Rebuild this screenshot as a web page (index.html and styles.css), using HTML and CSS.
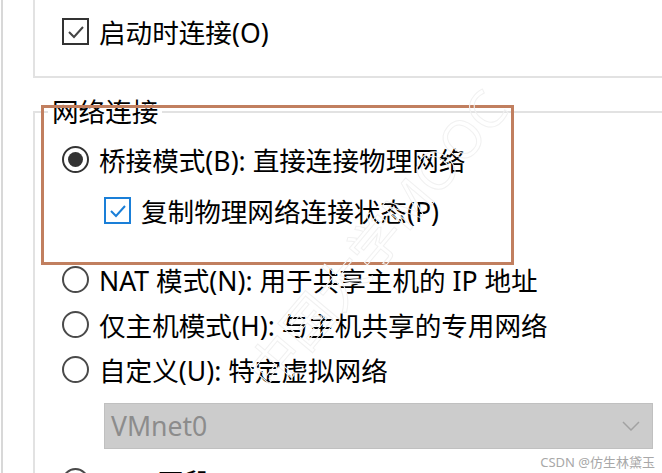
FILE: index.html
```html
<!DOCTYPE html>
<html lang="zh-CN">
<head>
  <meta charset="UTF-8">
  <meta name="viewport" content="width=device-width, initial-scale=1.0">
  <title>网络连接</title>
  <link rel="stylesheet" href="styles.css">
</head>
<body>
  <div class="frame">
    <!-- Device status group (top part cut off) -->
    <div class="group-top">
      <label class="opt">
        <span class="box"><svg viewBox="0 0 22 22" width="22" height="22"><polyline points="4,11 9,16 18,6" /></svg></span>
        启动时连接(O)
      </label>
    </div>

    <!-- Network connection group -->
    <fieldset class="net">
      <legend>网络连接</legend>
      <div class="net-body">
        <label class="opt"><span class="radio on"></span>桥接模式(B): 直接连接物理网络</label>
        <label class="opt sub">
          <span class="box blue"><svg viewBox="0 0 22 22" width="22" height="22"><polyline points="4,11 9,16 18,6" /></svg></span>
          复制物理网络连接状态(P)
        </label>
        <label class="opt spaced"><span class="radio"></span>NAT 模式(N): 用于共享主机的 IP 地址</label>
        <label class="opt"><span class="radio"></span>仅主机模式(H): 与主机共享的专用网络</label>
        <label class="opt"><span class="radio"></span>自定义(U): 特定虚拟网络</label>
        <div class="select">
          <span>VMnet0</span>
          <svg class="chev" viewBox="0 0 18 10" width="18" height="10"><polyline points="1,1 9,9 17,1" /></svg>
        </div>
        <label class="opt last"><span class="radio"></span>LAN 区段(L):</label>
      </div>
    </fieldset>
  </div>

  <div class="highlight"></div>
  <div class="watermark">中国大学MOOC</div>
  <div class="credit">CSDN @仿生林黛玉</div>
</body>
</html>
```

FILE: styles.css
```css
html, body {
  margin: 0;
  height: 100%;
  overflow: hidden;
  background: #fff;
}
body {
  font-family: "Noto Sans", "Noto Sans CJK SC", sans-serif;
  font-size: 26.6px;
  color: #000;
  position: relative;
}
.frame {
  margin-left: 1px;
  border-left: 2px solid #d8d8d8;
  height: 473px;
}
.group-top {
  margin-left: 30px;
  border-left: 2px solid #e2e2e2;
  border-bottom: 2px solid #e2e2e2;
  padding: 9px 0 0 27px;
  height: 67px;
}
.opt {
  display: flex;
  align-items: center;
  gap: 10px;
  height: 45px;
  white-space: nowrap;
}
.box {
  width: 27px;
  height: 27px;
  box-sizing: border-box;
  border: 2px solid #333;
  display: flex;
  align-items: center;
  justify-content: center;
  flex: none;
}
.box svg polyline {
  fill: none;
  stroke: #444;
  stroke-width: 2;
}
.box.blue {
  border-color: #1a7fd8;
}
.box.blue svg polyline {
  stroke: #1a7fd8;
}
.radio {
  width: 27px;
  height: 27px;
  box-sizing: border-box;
  border: 2px solid #4a4a4a;
  border-radius: 50%;
  flex: none;
  display: flex;
  align-items: center;
  justify-content: center;
}
.radio.on {
  border-color: #333;
}
.radio.on::after {
  content: "";
  width: 15px;
  height: 15px;
  border-radius: 50%;
  background: #333;
}
.net {
  margin: 19px -40px 0 30px;
  padding: 10px 0 0 0;
  border: 2px solid #e2e2e2;
  border-right: none;
  border-bottom: none;
  min-width: 0;
}
.net legend {
  margin-left: 13px;
  padding: 0 4px;
  line-height: 30px;
}
.net-body {
  padding-left: 27px;
}
.sub {
  margin-left: 42px;
  margin-top: 6px;
}
.spaced {
  margin-top: 24px;
}
.select {
  margin: 11px 0 0 42px;
  width: 549px;
  height: 46px;
  box-sizing: border-box;
  background: #cccccc;
  border: 1px solid #c0c0c0;
  display: flex;
  align-items: center;
  justify-content: space-between;
  padding: 0 12px 0 6px;
  color: #8c8c8c;
}
.chev polyline {
  fill: none;
  stroke: #a2a2a2;
  stroke-width: 1.5;
}
.last {
  margin-top: 10px;
}
.highlight {
  position: absolute;
  left: 41px;
  top: 105px;
  width: 473px;
  height: 160px;
  box-sizing: border-box;
  border: 3px solid #c17f5f;
}
.watermark {
  position: absolute;
  left: 190px;
  top: 200px;
  font-size: 52px;
  white-space: nowrap;
  color: transparent;
  -webkit-text-stroke: 1px #f1f1f1;
  transform: rotate(-50deg);
  pointer-events: none;
}
.credit {
  position: absolute;
  right: 7px;
  bottom: 2px;
  font-size: 13px;
  color: #a8a8a8;
}
```
